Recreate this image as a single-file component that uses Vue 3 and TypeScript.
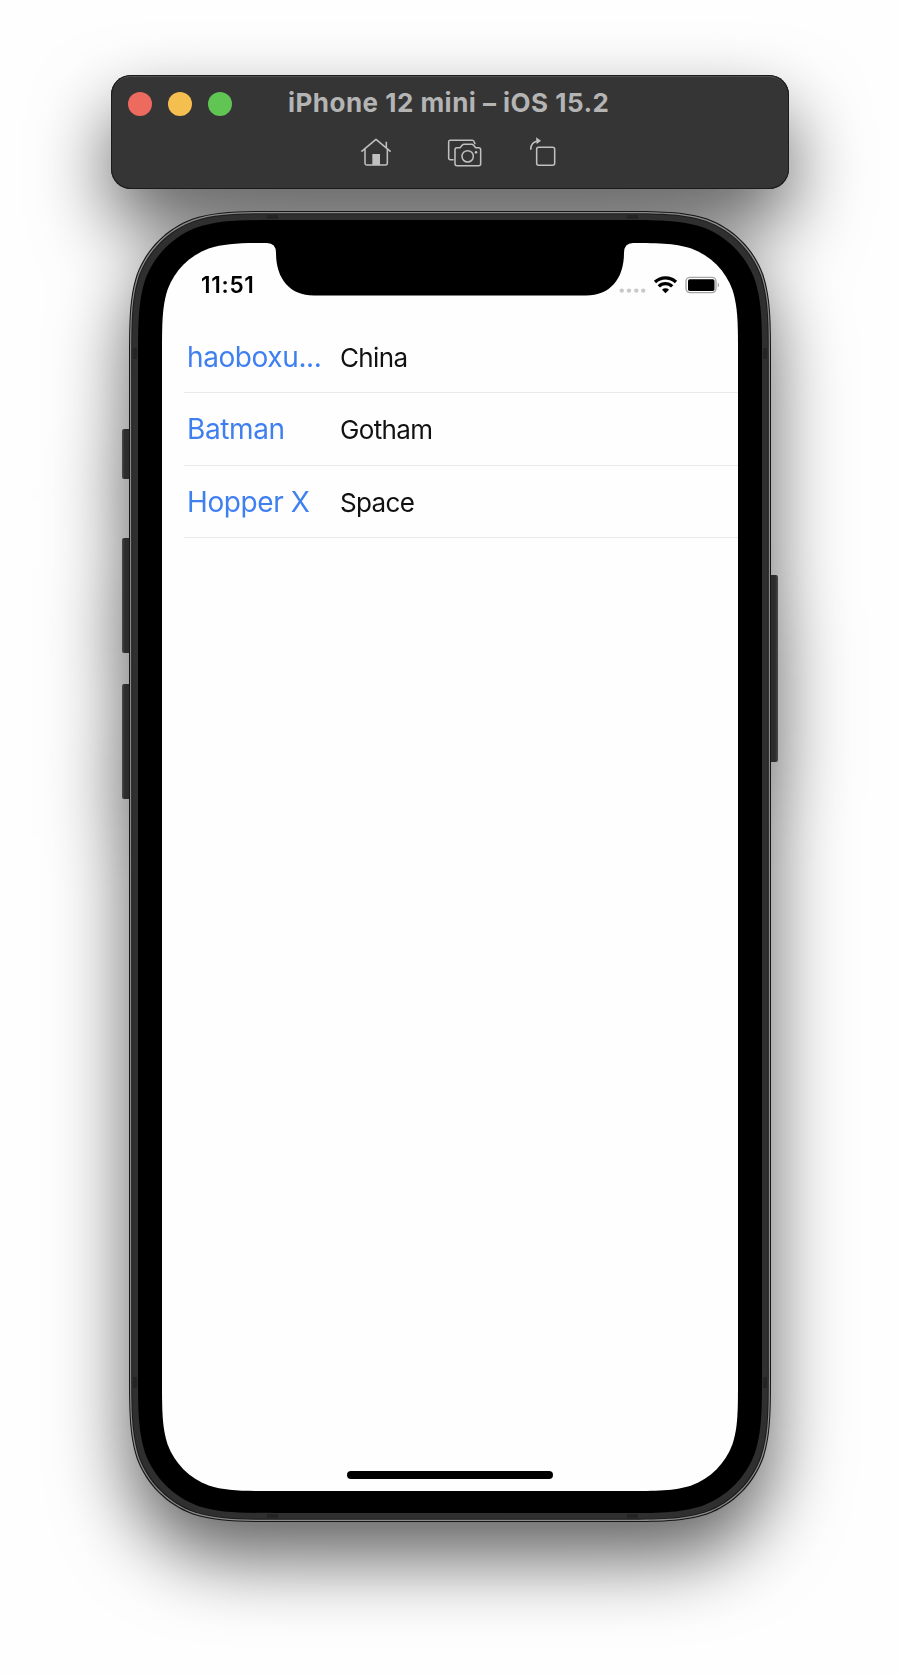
<script setup lang="ts">
interface Person {
  name: string
  place: string
}

interface Mark {
  x: number
  y: number
  w: number
  h: number
}

const people: Person[] = [
  { name: 'haoboxu...', place: 'China' },
  { name: 'Batman', place: 'Gotham' },
  { name: 'Hopper X', place: 'Space' },
]

const lights: string[] = ['close', 'minimise', 'maximise']

const antennas: Mark[] = [
  { x: 138, y: 4, w: 11, h: 4 },
  { x: 498, y: 4, w: 11, h: 4 },
  { x: 138, y: 1303, w: 11, h: 4 },
  { x: 498, y: 1303, w: 11, h: 4 },
  { x: 4, y: 137, w: 4, h: 11 },
  { x: 634, y: 137, w: 4, h: 11 },
  { x: 4, y: 1166, w: 4, h: 11 },
  { x: 634, y: 1166, w: 4, h: 11 },
]

/** Rectangle with continuous-curvature corners. */
function smoothRect(x: number, y: number, w: number, h: number, r: number): string {
  const corner: [number, number][] = [
    [1.5287, 0],
    [1.0885, 0],
    [0.8684, 0],
    [0.6315, 0.0749],
    [0.3728, 0.1691],
    [0.1691, 0.3728],
    [0.0749, 0.6315],
    [0, 0.8684],
    [0, 1.0885],
    [0, 1.5287],
  ]
  const place = (right: boolean, bottom: boolean, reverse: boolean): string => {
    const pts = (reverse ? [...corner].reverse() : corner).map(([dx, dy]) => {
      const px = right ? x + w - dx * r : x + dx * r
      const py = bottom ? y + h - dy * r : y + dy * r
      return `${px.toFixed(2)} ${py.toFixed(2)}`
    })
    return `L${pts[0]} C${pts.slice(1, 4).join(' ')} C${pts.slice(4, 7).join(' ')} C${pts.slice(7, 10).join(' ')}`
  }
  const d = [
    place(true, false, false),
    place(true, true, true),
    place(false, true, false),
    place(false, false, true),
  ].join(' ')
  return `M${d.slice(1)} Z`
}

const shell = smoothRect(0, 0, 642, 1311, 101)
const rim = smoothRect(1, 1, 640, 1309, 100.4)
const groove = smoothRect(2.2, 2.2, 637.6, 1306.6, 99.6)
const frame = smoothRect(3.2, 3.2, 635.6, 1304.6, 99)
const bezel = smoothRect(9, 9, 624, 1293, 95)
const glass = smoothRect(33, 32, 576, 1248, 74)
</script>

<template>
  <main class="desktop">
    <div class="simulator">
      <header class="toolbar">
        <div class="title-row">
          <div class="lights">
            <span v-for="light in lights" :key="light" class="light" :class="light"></span>
          </div>
          <h1 class="title">iPhone 12 mini – iOS 15.2</h1>
        </div>
        <div class="tools">
          <svg class="tool home" viewBox="0 0 96 90" width="32" height="30">
            <path d="M4 44 L48 7 L92 44 M15 36 V79 Q15 84 20 84 H76 Q82 84 82 79 V36 M79 32 V14" />
            <rect class="solid" x="37" y="51" width="23" height="33" />
          </svg>
          <svg class="tool camera" viewBox="0 0 105 90" width="35" height="30">
            <path d="M20 68 H10 Q5 68 5 63 V15 Q5 10 10 10 H76 Q81 10 82 16 L84 22" />
            <path d="M30 32 H39 L46 24 Q48 22 51 22 H74 Q77 22 79 24 L86 32 H95 Q101 32 101 38 V81 Q101 86 95 86 H30 Q24 86 24 81 V38 Q24 32 30 32 Z" />
            <circle cx="62" cy="58" r="17" />
            <circle class="solid" cx="87" cy="46" r="4" />
          </svg>
          <svg class="tool rotate" viewBox="0 0 87 90" width="29" height="30">
            <rect x="26" y="31" width="54" height="54" rx="6" />
            <path d="M8 38 Q8 14 32 12" />
            <path class="solid" d="M24 1 L39 11 L26 21 Z" />
          </svg>
        </div>
      </header>

      <section class="phone">
        <svg class="body" viewBox="0 0 642 1311" width="642" height="1311">
          <path :d="shell" fill="#161616" />
          <path :d="rim" fill="#8a8a8a" />
          <path :d="groove" fill="#1c1c1c" />
          <path :d="frame" fill="#2f2f2f" />
          <rect v-for="(m, i) in antennas" :key="i" :x="m.x" :y="m.y" :width="m.w" :height="m.h" fill="#242424" />
          <path :d="bezel" fill="#000" />
          <path :d="glass" fill="#fefefe" />
          <path
            d="M138 31 V32 Q147 32 147 42 C147 68 161 84.5 185 84.5 H457 C481 84.5 495 68 495 42 Q495 32 504 32 V31 Z"
            fill="#000"
          />
        </svg>
        <i class="key silent"></i>
        <i class="key volume-up"></i>
        <i class="key volume-down"></i>
        <i class="key power"></i>

        <div class="screen">
          <div class="status">
            <span class="time">11:51</span>
            <svg class="indicators" viewBox="0 0 100 20" width="100" height="20">
              <g fill="#c9c9c9">
                <circle cx="2.8" cy="15.6" r="2.2" />
                <circle cx="10" cy="15.6" r="2.2" />
                <circle cx="17.3" cy="15.6" r="2.2" />
                <circle cx="24.2" cy="15.6" r="2.2" />
              </g>
              <g fill="none" stroke="#000" stroke-width="3.3">
                <path d="M36 7 A15.2 15.2 0 0 1 57 7" />
                <path d="M39.8 11.4 A9.5 9.5 0 0 1 53.2 11.4" />
              </g>
              <path d="M46.5 18.2 L43 14.8 A5 5 0 0 1 50 14.8 Z" />
              <rect x="67" y="2.4" width="30" height="15.2" rx="4" fill="none" stroke="#a5a5a5" stroke-width="1.4" />
              <rect x="69" y="4.2" width="26.5" height="11.8" rx="1.8" />
              <path d="M98.8 7.5 A3 3 0 0 1 98.8 12.5 Z" fill="#a5a5a5" />
            </svg>
          </div>
          <ul class="list">
            <li v-for="person in people" :key="person.name" class="row">
              <a class="name">{{ person.name }}</a>
              <span class="place">{{ person.place }}</span>
            </li>
          </ul>
          <div class="home-bar"></div>
        </div>
      </section>
    </div>
  </main>
</template>

<style>
body {
  margin: 0;
  background: #fefefe;
}
</style>

<style scoped>
.desktop {
  box-sizing: border-box;
  width: 900px;
  height: 1674px;
  padding-top: 75px;
  overflow: hidden;
  background: #fefefe;
  font-family: Inter, 'Liberation Sans', sans-serif;
}

.simulator {
  display: flex;
  flex-direction: column;
  align-items: center;
  gap: 22px;
  filter: drop-shadow(0 36px 38px rgba(0, 0, 0, 0.62));
}

.toolbar {
  box-sizing: border-box;
  width: 678px;
  height: 114px;
  border-radius: 20px;
  background: #353535;
  box-shadow: inset 0 0 0 1px #1b1b1b, inset 0 2px 0 #505050;
}

.title-row {
  display: flex;
  align-items: center;
  height: 58px;
  padding-left: 17px;
}

.lights {
  display: flex;
  gap: 16px;
  width: 160px;
}

.light {
  width: 24px;
  height: 24px;
  border-radius: 50%;
}

.close {
  background: #ec6a5e;
}

.minimise {
  background: #f5bf4f;
}

.maximise {
  background: #61c554;
}

.title {
  margin: 0 0 2px;
  color: #b4b4b4;
  font-size: 26px;
  font-weight: 700;
  line-height: 32px;
  letter-spacing: 0.48px;
  white-space: nowrap;
}

.tools {
  display: flex;
  padding-left: 249px;
  margin-top: 4px;
}

.tool {
  fill: none;
  stroke: #c0c0c0;
  stroke-width: 4.6;
  stroke-linejoin: round;
}

.tool .solid {
  fill: #c0c0c0;
  stroke: none;
}

.camera {
  margin-left: 55px;
}

.rotate {
  margin-left: 46px;
}

.phone {
  position: relative;
  width: 642px;
  height: 1311px;
}

.body {
  position: absolute;
  inset: 0;
}

.key {
  position: absolute;
  left: -7px;
  width: 7px;
  border-radius: 2px 0 0 2px;
  background: linear-gradient(90deg, #4a4a4a, #2c2c2c 40%);
}

.silent {
  top: 218px;
  height: 50px;
}

.volume-up {
  top: 327px;
  height: 115px;
}

.volume-down {
  top: 473px;
  height: 115px;
}

.power {
  top: 364px;
  left: 642px;
  height: 187px;
  border-radius: 0 2px 2px 0;
  background: linear-gradient(270deg, #4a4a4a, #2c2c2c 40%);
}

.screen {
  position: relative;
  display: flex;
  flex-direction: column;
  height: 1248px;
  margin: 0 33px;
  top: 32px;
}

.status {
  display: flex;
  align-items: center;
  justify-content: space-between;
  height: 20px;
  padding: 32px 19px 0 39px;
}

.time {
  font-size: 22.5px;
  font-weight: 600;
  line-height: 20px;
  letter-spacing: 0.75px;
}

.list {
  flex: 1;
  margin: 25.6px 0 0;
  padding: 0 0 0 22px;
  list-style: none;
}

.row {
  box-sizing: border-box;
  display: flex;
  align-items: baseline;
  height: 72.6px;
  padding: 18px 0 0 3px;
  border-bottom: 1px solid #e9e9ea;
  line-height: 36px;
  white-space: nowrap;
}

.name {
  width: 153px;
  color: #3f7ff0;
  font-size: 28px;
  letter-spacing: -0.4px;
}

.place {
  color: #111;
  font-size: 26px;
  letter-spacing: -0.65px;
}

.home-bar {
  width: 206px;
  height: 8px;
  margin: 0 auto 12px;
  border-radius: 4px;
  background: #000;
}
</style>
